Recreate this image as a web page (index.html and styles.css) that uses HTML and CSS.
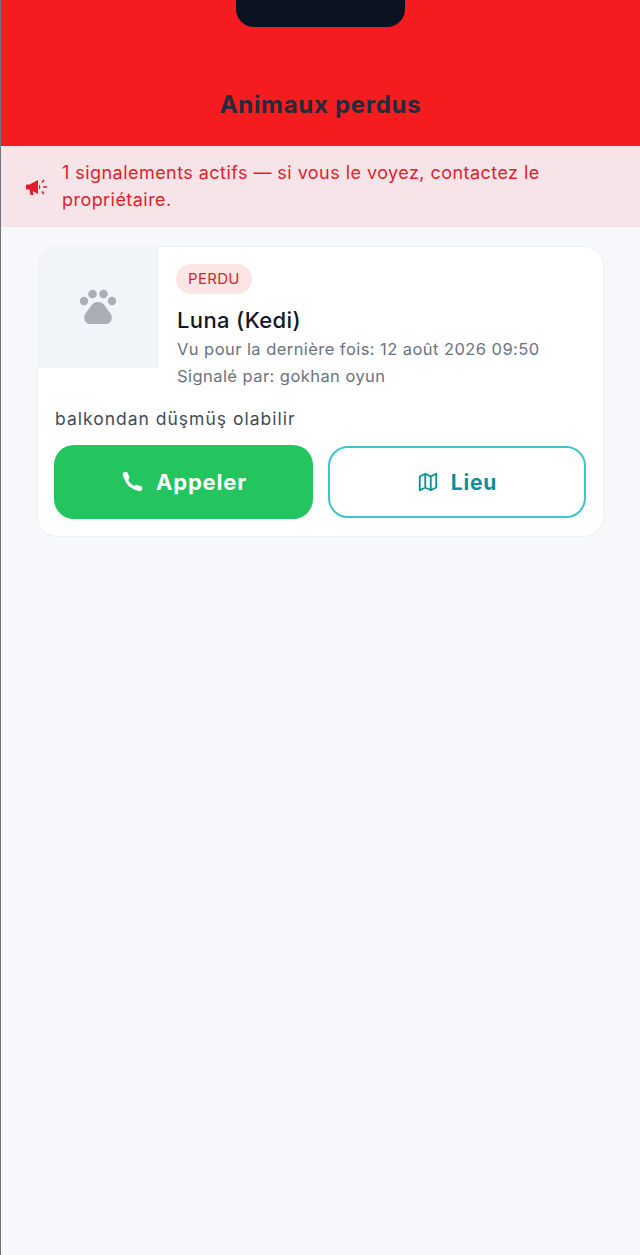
FILE: index.html
```html
<!DOCTYPE html>
<html lang="fr">
<head>
  <meta charset="UTF-8">
  <title>Animaux perdus</title>
  <link rel="stylesheet" href="styles.css">
</head>
<body>

<div class="screen">
  <header class="topbar">
    <div class="notch"></div>
    <h1>Animaux perdus</h1>
  </header>

  <section class="notice">
    <svg class="notice-icon" viewBox="0 0 22 20" aria-hidden="true">
      <path d="M1 7.500h3v5H1a1 1 0 0 1-1-1v-3a1 1 0 0 1 1-1z" fill="currentColor"/>
      <path d="M4 7.200 12 3v14l-8-4.200z" fill="currentColor"/>
      <path d="M3.500 12.500h3l1 5.500h-3z" fill="currentColor"/>
      <path d="M13 7.500a3 3 0 0 1 0 5z" fill="currentColor"/>
      <path d="M16 5.500 18 3M17 10h4M16 14.500l2 2.500" stroke="currentColor" stroke-width="1.600" fill="none"/>
    </svg>
    <p>1 signalements actifs — si vous le voyez, contactez le propriétaire.</p>
  </section>

  <main class="list">
    <article class="card">
      <div class="card-top">
        <div class="thumb">
          <svg viewBox="0 0 36 36" aria-hidden="true">
            <circle cx="4" cy="12" r="4.200"/>
            <circle cx="12.500" cy="5" r="4.300"/>
            <circle cx="23.500" cy="5" r="4.300"/>
            <circle cx="32" cy="12" r="4.200"/>
            <path d="M18 13c3 0 5 1.500 7 4l5.500 7.500c3 4.500.5 10.500-4.500 10.500H10c-5 0-7.500-6-4.500-10.500L11 17c2-2.500 4-4 7-4z"/>
          </svg>
        </div>
        <div class="info">
          <span class="badge">PERDU</span>
          <h2 class="name">Luna (Kedi)</h2>
          <p class="meta">Vu pour la dernière fois: 12 août 2026 09:50</p>
          <p class="meta">Signalé par: gokhan oyun</p>
        </div>
      </div>
      <p class="note">balkondan düşmüş olabilir</p>
      <div class="actions">
        <a class="btn btn-call">
          <svg viewBox="0 0 24 24" aria-hidden="true">
            <path fill="none" stroke="currentColor" stroke-width="3" d="M5.500 6C6.500 13 11 17.500 18 18.500"/>
            <path fill="none" stroke="currentColor" stroke-width="5.500" stroke-linecap="round" d="M5.500 4.500 6.500 7.500M16.500 17.500 19.500 18.500"/>
          </svg>
          Appeler
        </a>
        <a class="btn btn-place">
          <svg viewBox="0 0 24 24" aria-hidden="true">
            <path fill="none" stroke="currentColor" stroke-width="2" stroke-linejoin="round" d="M3 6 9 3l6 3 6-3v15l-6 3-6-3-6 3zM9 3v15M15 6v15"/>
          </svg>
          Lieu
        </a>
      </div>
    </article>
  </main>
</div>

</body>
</html>
```

FILE: styles.css
```css
* { box-sizing: border-box; margin: 0; padding: 0; }
html, body { height: 100%; }
body { font-family: Inter, "Noto Sans", Arial, sans-serif; background: #f6f8fc; }

.screen {
  min-height: 100%;
  border-left: 1px solid #6f7280;
}

/* header */
.topbar {
  height: 146px;
  background: #f51c20;
  display: flex;
  flex-direction: column;
  align-items: center;
  justify-content: flex-end;
  padding-bottom: 26px;
  position: relative;
}
.topbar h1 {
  font-size: 24px;
  line-height: 30px;
  font-weight: 700;
  letter-spacing: .7px;
  color: #252a3a;
}
.notch {
  position: absolute;
  top: 0;
  left: 235px;
  width: 169px;
  height: 27px;
  background: #0b1220;
  border-radius: 0 0 18px 18px;
}

/* banner */
.notice {
  height: 81px;
  background: #f7e4e8;
  display: flex;
  align-items: center;
  gap: 14px;
  padding: 0 24px 0 25px;
  color: #e11d2a;
}
.notice-icon { width: 22px; height: 20px; flex: none; }
.notice p {
  font-size: 18px;
  line-height: 27px;
  letter-spacing: .45px;
  margin-bottom: 2px;
}

/* list */
.list { padding: 19px 36px; }
.card {
  background: #fff;
  box-shadow: inset 0 0 0 1px #eceff4;
  border-radius: 20px;
  overflow: hidden;
  padding-bottom: 18px;
}
.card-top { display: flex; }
.thumb {
  width: 122px;
  height: 122px;
  flex: none;
  background: #f1f4f8;
  display: flex;
  align-items: center;
  justify-content: center;
}
.thumb svg { width: 36px; height: 36px; fill: #a9aeb7; }
.info { padding: 18px 17px 0 18px; }
.badge {
  display: inline-block;
  height: 30px;
  line-height: 30px;
  padding: 0 12px;
  margin-left: -1px;
  border-radius: 15px;
  background: #fde5e5;
  color: #e11d2a;
  font-size: 15px;
  letter-spacing: .3px;
}
.name {
  font-size: 22px;
  line-height: 28px;
  font-weight: 500;
  letter-spacing: .36px;
  color: #111827;
  margin-top: 12px;
}
.meta { font-size: 16.500px; line-height: 27px; letter-spacing: .44px; color: #6b7280; }
.meta:first-of-type { margin-top: 2px; }

.note {
  font-size: 17.500px;
  line-height: 26px;
  color: #414b5a;
  margin: 16px 18px 0;
  letter-spacing: 1px;
}
.actions {
  display: flex;
  gap: 15px;
  margin: 13px 18px 0 17px;
}
.btn {
  flex: 1;
  height: 74px;
  border-radius: 20px;
  display: flex;
  align-items: center;
  justify-content: center;
  gap: 12px;
  font-size: 22px;
  font-weight: 700;
  letter-spacing: .8px;
}
.btn svg { width: 24px; height: 24px; flex: none; }
.btn-call { flex: 0 0 259px; background: #22c55e; color: #fff; }
.btn-place {
  background: #fff;
  color: #0d8f98;
  border: 2px solid #3cc5ce;
  height: 72px;
  margin-top: 1px;
  font-size: 21px;
}
.btn-place svg { width: 22px; height: 22px; }
```
